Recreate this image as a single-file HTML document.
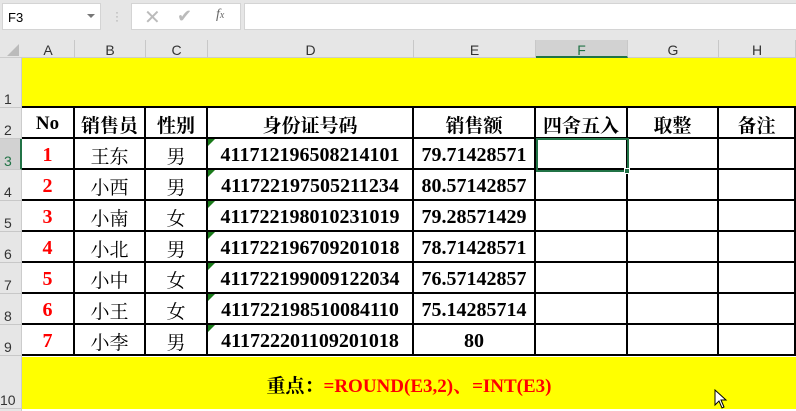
<!DOCTYPE html>
<html><head><meta charset="utf-8"><style>
*{margin:0;padding:0;box-sizing:border-box}
body{width:796px;height:411px;overflow:hidden;background:#fff;position:relative;font-family:"Liberation Serif","Noto Serif CJK SC",serif}
.a{position:absolute}
.bx{background:#fff;border:1px solid #d4d4d4}
.ch{position:absolute;top:40px;height:18px;font:14px "Liberation Sans",sans-serif;color:#333;text-align:center;line-height:20px;border-right:1px solid #c8c8c8}
.rh{position:absolute;left:0;width:22px;font:14px "Liberation Sans",sans-serif;color:#333;border-bottom:1px solid #c8c8c8;display:flex;align-items:flex-end;padding-left:4px}
.row{position:absolute;left:22px;width:774px;height:31px;border-bottom:2px solid #000;display:flex}
.row div{height:100%;display:flex;align-items:center;justify-content:center;font-size:20px;font-weight:bold;color:#000;border-right:2px solid #000;position:relative;white-space:nowrap;padding-top:3px}
.row.h div{font-size:19px}
.row div.n{font-weight:normal;font-size:19px}
.row div.r{color:#f00}
.w1{width:53px}.w2{width:71px}.w3{width:62px}.w4{width:206px}.w5{width:122px}.w6{width:92px}.w7{width:91px}.w8{width:77px}
.tri{position:absolute;left:0;top:0;width:0;height:0;border-top:7px solid #1a7a1a;border-right:7px solid transparent}
</style></head><body>
<div class="a" style="left:0;top:0;width:796px;height:40px;background:#e6e6e6"></div>
<div class="a bx" style="left:2px;top:3px;width:99px;height:27px;font:13px 'Liberation Sans',sans-serif;padding:6px 5px">F3</div>
<div class="a" style="left:87px;top:14px;border-left:4px solid transparent;border-right:4px solid transparent;border-top:4px solid #777"></div>
<div class="a" style="left:115px;top:10px;color:#aaa;font:12px sans-serif;line-height:4px">·<br>·<br>·</div>
<div class="a bx" style="left:131px;top:3px;width:110px;height:27px"></div>
<div class="a" style="left:144px;top:5px;color:#bbb;font:20px 'Liberation Sans',sans-serif">✕</div>
<div class="a" style="left:177px;top:6px;color:#bbb;font:18px 'DejaVu Sans',sans-serif">✔</div>
<div class="a" style="left:216px;top:7px;color:#666;font:italic 14px 'Liberation Serif',serif">f<span style="font-size:10px">x</span></div>
<div class="a bx" style="left:244px;top:3px;width:560px;height:27px"></div>
<div class="a" style="left:0;top:40px;width:796px;height:18px;background:#e6e6e6;border-bottom:1px solid #ccc"></div>
<div class="a" style="left:7px;top:44px;width:0;height:0;border-left:12px solid transparent;border-bottom:12px solid #bbb"></div>
<div class="ch" style="left:22px;width:53px">A</div>
<div class="ch" style="left:75px;width:71px">B</div>
<div class="ch" style="left:146px;width:62px">C</div>
<div class="ch" style="left:208px;width:206px">D</div>
<div class="ch" style="left:414px;width:122px">E</div>
<div class="ch" style="left:536px;width:92px;background:#d2d2d2;border-bottom:2px solid #217346;color:#217346">F</div>
<div class="ch" style="left:628px;width:91px">G</div>
<div class="ch" style="left:719px;width:77px">H</div>
<div class="a" style="left:0;top:58px;width:22px;height:353px;background:#e6e6e6;border-right:1px solid #ccc"></div>
<div class="rh" style="top:58px;height:50px">1</div>
<div class="rh" style="top:108px;height:31px">2</div>
<div class="rh" style="top:139px;height:31px;background:#d2d2d2;color:#217346;border-right:2px solid #217346">3</div>
<div class="rh" style="top:170px;height:31px">4</div>
<div class="rh" style="top:201px;height:31px">5</div>
<div class="rh" style="top:232px;height:31px">6</div>
<div class="rh" style="top:263px;height:31px">7</div>
<div class="rh" style="top:294px;height:31px">8</div>
<div class="rh" style="top:325px;height:31px">9</div>
<div class="rh" style="top:356px;height:53px;padding-left:0">10</div>
<div class="a" style="left:22px;top:58px;width:774px;height:50px;background:#ff0;border-bottom:2px solid #000"></div>

<div class="row h" style="top:108px"><div class="w1">No</div><div class="w2">销售员</div><div class="w3">性别</div><div class="w4">身份证号码</div><div class="w5">销售额</div><div class="w6">四舍五入</div><div class="w7">取整</div><div class="w8">备注</div></div>
<div class="row" style="top:139px"><div class="w1 r">1</div><div class="w2 n">王东</div><div class="w3 n">男</div><div class="w4"><span class="tri"></span>411712196508214101</div><div class="w5">79.71428571</div><div class="w6"></div><div class="w7"></div><div class="w8"></div></div>
<div class="row" style="top:170px"><div class="w1 r">2</div><div class="w2 n">小西</div><div class="w3 n">男</div><div class="w4"><span class="tri"></span>411722197505211234</div><div class="w5">80.57142857</div><div class="w6"></div><div class="w7"></div><div class="w8"></div></div>
<div class="row" style="top:201px"><div class="w1 r">3</div><div class="w2 n">小南</div><div class="w3 n">女</div><div class="w4"><span class="tri"></span>411722198010231019</div><div class="w5">79.28571429</div><div class="w6"></div><div class="w7"></div><div class="w8"></div></div>
<div class="row" style="top:232px"><div class="w1 r">4</div><div class="w2 n">小北</div><div class="w3 n">男</div><div class="w4"><span class="tri"></span>411722196709201018</div><div class="w5">78.71428571</div><div class="w6"></div><div class="w7"></div><div class="w8"></div></div>
<div class="row" style="top:263px"><div class="w1 r">5</div><div class="w2 n">小中</div><div class="w3 n">女</div><div class="w4"><span class="tri"></span>411722199009122034</div><div class="w5">76.57142857</div><div class="w6"></div><div class="w7"></div><div class="w8"></div></div>
<div class="row" style="top:294px"><div class="w1 r">6</div><div class="w2 n">小王</div><div class="w3 n">女</div><div class="w4"><span class="tri"></span>411722198510084110</div><div class="w5">75.14285714</div><div class="w6"></div><div class="w7"></div><div class="w8"></div></div>
<div class="row" style="top:325px"><div class="w1 r">7</div><div class="w2 n">小李</div><div class="w3 n">男</div><div class="w4"><span class="tri"></span>411722201109201018</div><div class="w5">80</div><div class="w6"></div><div class="w7"></div><div class="w8"></div></div>

<div class="a" style="left:536px;top:138px;width:93px;height:34px;border:2px solid #217346"></div>
<div class="a" style="left:624px;top:168px;width:6px;height:6px;background:#217346;border:1px solid #fff"></div>

<div class="a" style="left:22px;top:357px;width:774px;height:52px;background:#ff0;display:flex;align-items:center;justify-content:center;font-weight:bold;font-size:19px;padding-top:2px;white-space:nowrap"><span>重点：</span><span style="color:#f00">=ROUND(E3,2)、=INT(E3)</span></div>
<svg class="a" style="left:714px;top:389px" width="14" height="20"><path d="M1 1 L1 16 L5 12 L8 19 L10 18 L7 11 L12 11 Z" fill="#fff" stroke="#000" stroke-width="1"/></svg>
</body></html>
